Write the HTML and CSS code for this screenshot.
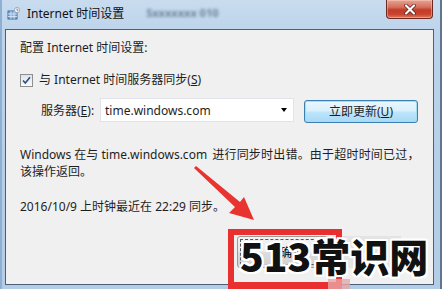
FILE: index.html
```html
<!DOCTYPE html>
<html lang="zh-CN">
<head>
<meta charset="utf-8">
<title>Internet 时间设置</title>
<link rel="stylesheet" href="styles.css">
</head>
<body>
<div class="window">
  <div class="titlebar">
    <svg class="app-icon" width="13" height="13" viewBox="0 0 13 13">
      <rect x="1" y="4" width="9" height="8" fill="#7fa9d6" stroke="#3d6fa8" stroke-width="1"/>
      <path d="M1 7h9M1 9.5h9M4 4v8M7 4v8" stroke="#dfeaf6" stroke-width="0.8"/>
      <circle cx="10" cy="3" r="2.6" fill="#f4f4f4" stroke="#8aa0b8" stroke-width="0.8"/>
      <path d="M10 1.6v1.6h1.2" stroke="#555" stroke-width="0.7" fill="none"/>
    </svg>
    <span class="title">Internet 时间设置</span>
    <span class="ghost">Sxxxxxxx 010</span>
    <div class="close">
      <svg width="14" height="11" viewBox="0 0 14 11">
        <path d="M3 1.5l8 8M11 1.5l-8 8" stroke="#5a1a14" stroke-width="3.6" stroke-linecap="round"/>
        <path d="M3 1.5l8 8M11 1.5l-8 8" stroke="#ffffff" stroke-width="2.2" stroke-linecap="round"/>
      </svg>
    </div>
  </div>
  <div class="client">
    <p class="line intro">配置 Internet 时间设置:</p>
    <label class="line check-row">
      <span class="checkbox">
        <svg width="9" height="9" viewBox="0 0 9 9"><path d="M1 4.5l2.3 2.5L8 1.3" stroke="#2b4f86" stroke-width="1.6" fill="none"/></svg>
      </span>
      与 Internet 时间服务器同步(<u>S</u>)
    </label>
    <div class="server-row">
      <span class="server-label">服务器(<u>E</u>):</span>
      <div class="combo">
        <span>time.windows.com</span>
        <span class="arrow"></span>
      </div>
      <button class="update">立即更新(<u>U</u>)</button>
    </div>
    <p class="msg">Windows 在与 time.windows.com <span class="wide">进行同步时出错。由于超时时间已过，</span><br>该操作返回。</p>
    <p class="msg date">2016/10/9 上时钟最近在 22:29 同步。</p>
    <div class="footer">
      <button class="ok"><span class="ok-text">确定</span></button>
      <span class="cancel-ghost"></span>
    </div>
  </div>
  <svg class="red-arrow" width="70" height="60" viewBox="0 0 70 60">
    <polygon points="2,2 4,0 48,36 52,31 62,54 37,47 43,41" fill="#e8332f"/>
  </svg>
  <div class="red-box"></div>
  <div class="watermark">513常识网</div>
  <div class="smear"></div>
</div>
</body>
</html>
```
FILE: styles.css
```css
html, body {
  margin: 0;
  padding: 0;
}
body {
  width: 442px;
  height: 289px;
  overflow: hidden;
  font-family: "Segoe UI", "Noto Sans", "Noto Sans CJK SC", sans-serif;
  font-size: 12px;
  color: #1e1e1e;
}
.window {
  position: relative;
  width: 442px;
  height: 289px;
  box-sizing: border-box;
  background: linear-gradient(180deg, #c9dcef 0%, #bcd3ea 12%, #b6cfe8 60%, #b3cde6 100%);
  border-right: 2px solid #5f7590;
  box-shadow: inset 2px 0 0 #8fb0d3;
}
.titlebar {
  height: 29px;
  display: flex;
  align-items: center;
  padding-left: 7px;
  position: relative;
}
.app-icon {
  margin-top: -2px;
}
.title {
  margin-left: 7px;
  margin-top: -4px;
  font-size: 12px;
  color: #111;
}
.ghost {
  margin-left: 22px;
  margin-top: -4px;
  color: #4f6479;
  font-size: 11px;
  font-weight: bold;
  filter: blur(1.4px);
  opacity: 0.75;
}
.close {
  position: absolute;
  right: 7px;
  top: 0;
  width: 47px;
  height: 19px;
  box-sizing: border-box;
  border: 1px solid #6a2a22;
  border-top: none;
  border-radius: 0 0 4px 4px;
  background: linear-gradient(180deg, #e8a394 0%, #d66f5c 40%, #c23b28 55%, #c9452f 80%, #de7b5e 100%);
  display: flex;
  align-items: center;
  justify-content: center;
  box-shadow: inset 0 0 0 1px rgba(255,220,210,0.4);
}
.client {
  margin-left: 5px;
  width: 429px;
  height: 256px;
  box-sizing: border-box;
  border: 1px solid #4c5f78;
  background: #f0f0f0;
  padding: 10px 0 0 14px;
}
.line {
  margin: 0;
  line-height: 16px;
  height: 16px;
  white-space: nowrap;
}
.check-row {
  display: flex;
  align-items: center;
  margin-top: 16px;
}
.checkbox {
  width: 11px;
  height: 11px;
  border: 1px solid #8e8f8f;
  background: linear-gradient(180deg, #dfe4ea, #fafbfc);
  display: flex;
  align-items: center;
  justify-content: center;
  margin-right: 6px;
}
.server-row {
  display: flex;
  align-items: center;
  margin-top: 10px;
  height: 24px;
}
.server-label {
  margin-left: 21px;
  width: 59px;
}
.combo {
  width: 194px;
  height: 24px;
  box-sizing: border-box;
  background: #fff;
  border: 1px solid #e2e3ea;
  display: flex;
  align-items: center;
  justify-content: space-between;
  padding: 0 6px 0 4px;
}
.arrow {
  width: 0;
  height: 0;
  border-left: 3.5px solid transparent;
  border-right: 3.5px solid transparent;
  border-top: 4px solid #000;
}
.update {
  margin-left: 10px;
  width: 114px;
  height: 23px;
  margin-top: 2px;
  border: 1px solid #3c7fb1;
  border-radius: 3px;
  background: linear-gradient(180deg, #eaf6fd 0%, #d9f0fc 48%, #bee6fd 52%, #a7d9f5 100%);
  box-shadow: inset 0 0 0 1px #a6dcf3;
  font-family: inherit;
  font-size: 12px;
  color: #1e1e1e;
  padding: 0;
}
.msg {
  margin: 24px 0 0;
  line-height: 17px;
  white-space: nowrap;
}
.wide {
  letter-spacing: 0.2px;
  margin-left: 2px;
}
.msg.date {
  margin-top: 18px;
}
.footer {
  display: flex;
  margin-top: 21px;
  margin-left: 217px;
  height: 32px;
}
.ok {
  width: 100px;
  height: 32px;
  border: 1px solid #9a9a9a;
  border-radius: 3px;
  background: linear-gradient(180deg, #f2f2f2 0%, #ebebeb 48%, #dddddd 52%, #cfcfcf 100%);
  font-family: inherit;
  font-size: 12px;
  padding: 0;
  outline: 1px dashed #555;
  outline-offset: -4px;
}
.ok-text {
  margin-left: 10px;
}
.cancel-ghost {
  width: 64px;
  height: 32px;
  background: #e4e4e4;
}
.red-arrow {
  position: absolute;
  left: 192px;
  top: 166px;
}
.red-box {
  position: absolute;
  left: 228px;
  top: 229px;
  width: 114px;
  height: 60px;
  box-sizing: border-box;
  border: 6px solid #ea2f30;
  border-bottom-width: 7px;
}
.watermark {
  position: absolute;
  left: 240px;
  top: 229px;
  font-family: "Noto Sans CJK SC", "Noto Sans", sans-serif;
  font-weight: 900;
  font-size: 39px;
  line-height: 52px;
  color: #111;
  text-shadow: 2px 0 0 #fff, -2px 0 0 #fff, 0 2px 0 #fff, 0 -2px 0 #fff, 2px 2px 0 #fff, -2px -2px 0 #fff, 2px -2px 0 #fff, -2px 2px 0 #fff;
}
.smear {
  position: absolute;
  left: 328px;
  top: 279px;
  width: 22px;
  height: 10px;
  background: #e7a6a8;
  opacity: 0.8;
}
```
